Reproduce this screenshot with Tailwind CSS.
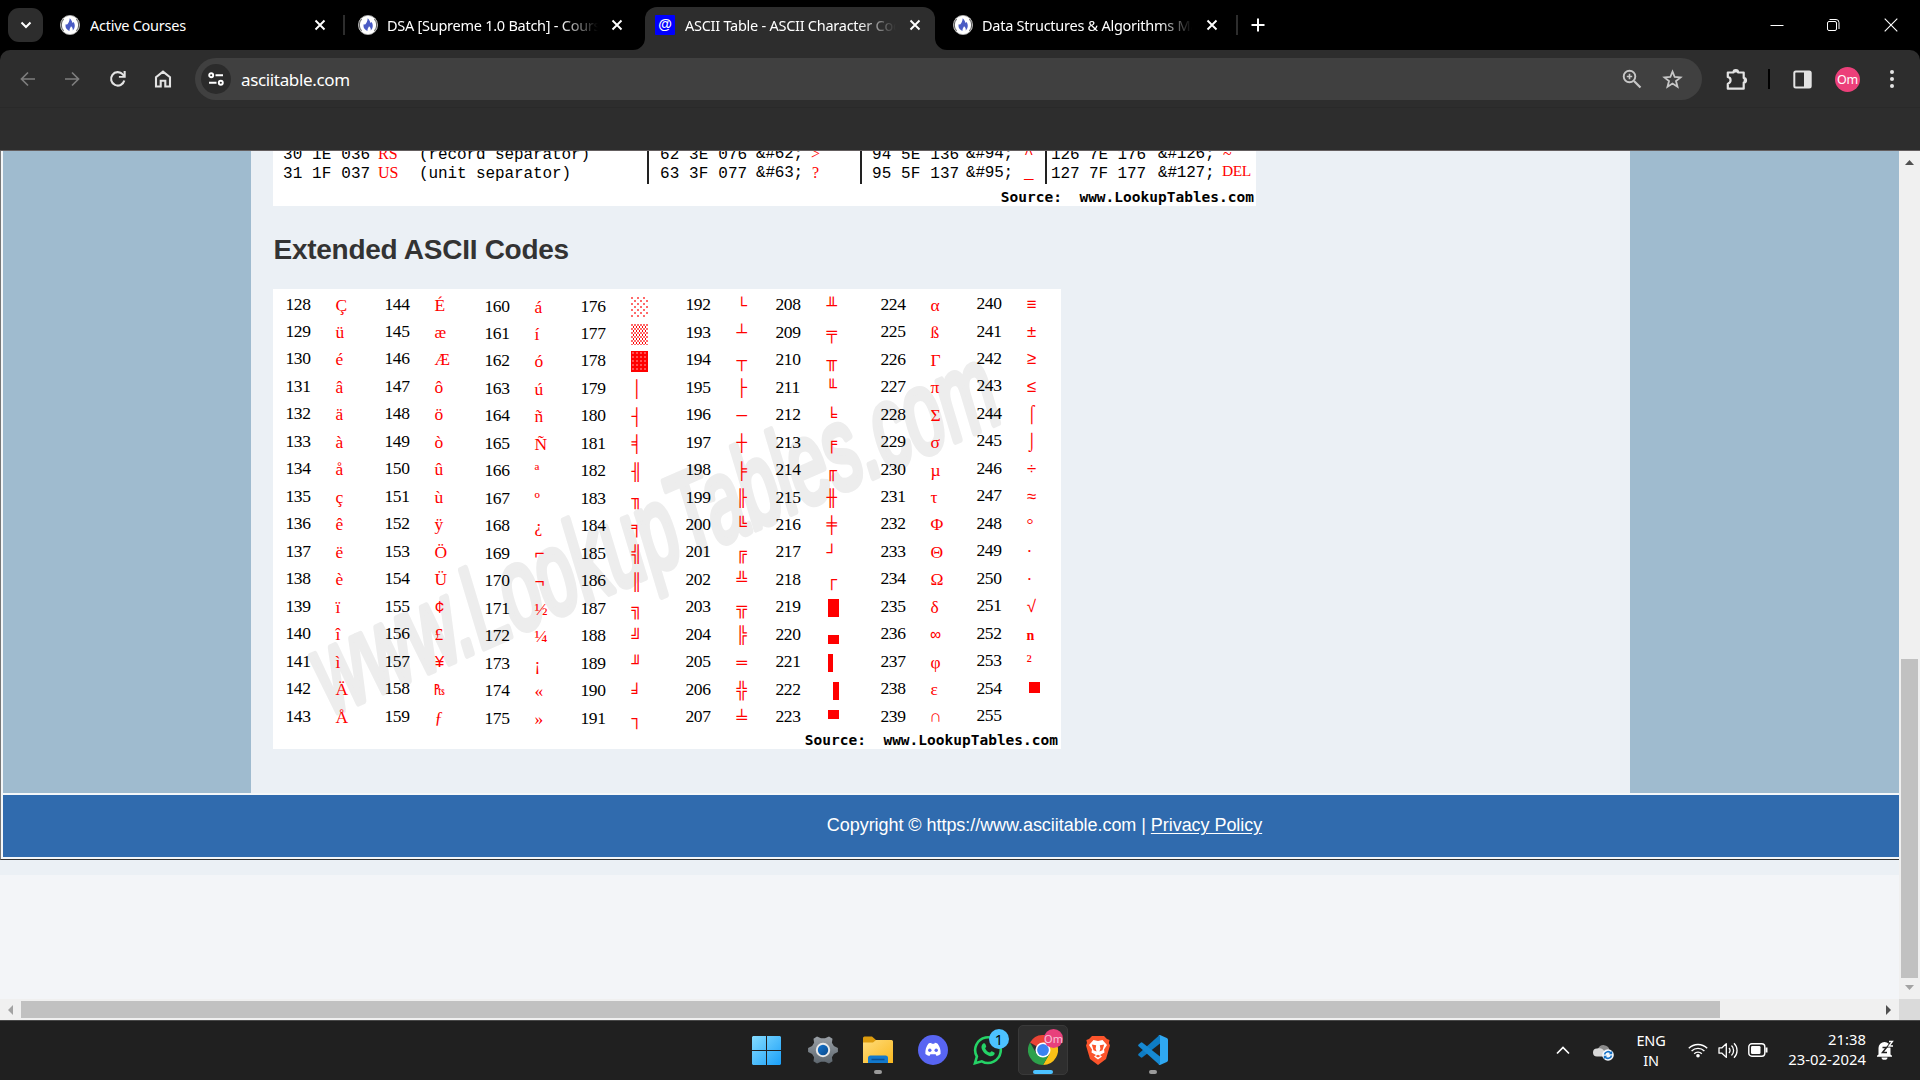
<!DOCTYPE html>
<html lang="en">
<head>
<meta charset="utf-8">
<title>ASCII Table</title>
<script src="https://cdn.jsdelivr.net/npm/@tailwindcss/browser@4"></script>
</head>
<body class="w-[1920px] h-[1080px] overflow-hidden flex flex-col bg-[#2d2d2d] font-['Noto_Sans','Open_Sans',sans-serif] text-white">

<svg class="hidden">
  <symbol id="fav" viewBox="0 0 20 20"><circle cx="10" cy="10" r="9.6" fill="#fff" stroke="#b9b9b9" stroke-width=".8"/><path d="M3.6 4.2A8.5 8.5 0 0 0 3.6 15.800M16.400 4.2a8.500 8.500 0 0 1 0 11.600" fill="none" stroke="#555" stroke-width="1"/><path d="M9.700 3.200c2.300 2 2.200 3.500 2.900 4.800l1-.900c1.600 2.500 1.800 6-.9 8.400.5-2-.5-3.300-1.700-4.300-.4 1.400-1.800 2.200-1.400 4.600-3-.5-5-4-3.700-6.700l1 .6c1.600-1.500 2.600-3.500 2.800-6.500z" fill="#4a5bc4"/></symbol>
  <symbol id="x" viewBox="0 0 12 12"><path d="M1.500 1.500l9 9M10.500 1.500l-9 9" stroke="#fff" stroke-width="1.900" fill="none"/></symbol>
</svg>

<!-- tab strip -->
<header class="h-[50px] shrink-0 bg-black flex relative text-[14.500px] leading-[24px] tracking-[-0.26px] whitespace-nowrap">
  <div class="w-[35px] h-[34px] mt-2 ml-2 rounded-[11px] bg-[#2d2d2d] flex items-center justify-center"><svg class="w-[12px] h-[8px]" viewBox="0 0 12 8"><path d="M1.500 1.500L6 6l4.500-4.500" fill="none" stroke="#fff" stroke-width="2"/></svg></div>
  <div class="w-[302px] h-full pl-[17px] flex items-center">
    <svg class="size-5 shrink-0"><use href="#fav"/></svg><span class="ml-[10px] w-[210px] overflow-hidden">Active Courses</span><svg class="ml-[14px] size-3 shrink-0"><use href="#x"/></svg><i class="ml-[17px] w-[2px] h-5 bg-[#2d2d2d] shrink-0"></i>
  </div>
  <div class="w-[300px] h-full pl-[13px] flex items-center">
    <svg class="size-5 shrink-0"><use href="#fav"/></svg><span class="ml-[9px] w-[211px] overflow-hidden [mask-image:linear-gradient(to_right,black_82%,transparent_100%)]">DSA [Supreme 1.0 Batch] - Course</span><svg class="ml-[13px] size-3 shrink-0"><use href="#x"/></svg>
  </div>
  <div class="w-[290px] h-[43px] mt-[7px] rounded-t-[12px] bg-[#2d2d2d] flex items-center pl-[10px] pb-[7px] relative">
    <svg class="absolute -left-3 bottom-0 size-3" viewBox="0 0 12 12"><path d="M12 0v12H0A12 12 0 0 0 12 0z" fill="#2d2d2d"/></svg>
    <svg class="absolute -right-3 bottom-0 size-3" viewBox="0 0 12 12"><path d="M0 0v12h12A12 12 0 0 1 0 0z" fill="#2d2d2d"/></svg>
    <span class="size-5 shrink-0 rounded-[1px] bg-[#0000ff] text-[14px] leading-[18px] text-center font-['Liberation_Sans',sans-serif] font-bold tracking-normal">@</span><span class="ml-[10px] w-[211px] overflow-hidden [mask-image:linear-gradient(to_right,black_82%,transparent_100%)]">ASCII Table - ASCII Character Codes</span><svg class="ml-[13px] size-3 shrink-0"><use href="#x"/></svg>
  </div>
  <div class="h-full pl-[18px] flex items-center">
    <svg class="size-5 shrink-0"><use href="#fav"/></svg><span class="ml-[9px] w-[210px] overflow-hidden [mask-image:linear-gradient(to_right,black_84%,transparent_100%)]">Data Structures &amp; Algorithms Masters</span><svg class="ml-[14px] size-3 shrink-0"><use href="#x"/></svg><i class="ml-[18px] w-[2px] h-5 bg-[#2d2d2d]"></i><svg class="ml-[13px] size-[14px]" viewBox="0 0 14 14"><path d="M7 .5v13M.5 7h13" stroke="#fff" stroke-width="2"/></svg>
  </div>
  <div class="ml-auto flex items-center pr-[22px] pb-[1px]">
    <svg class="w-[14px] h-[14px]" viewBox="0 0 14 14"><path d="M.5 7.500h13" stroke="#fff" stroke-width="1"/></svg>
    <svg class="ml-[42px] size-[14px]" viewBox="0 0 14 14"><rect x="1.500" y="3.500" width="9" height="9" rx="1.500" fill="none" stroke="#fff"/><path d="M3.500 1.500h6.500a3 3 0 0 1 3 3V11" fill="none" stroke="#fff"/></svg>
    <svg class="ml-[44px] size-[14px]" viewBox="0 0 14 14"><path d="M.7.7l12.600 12.600M13.300.7L.7 13.300" stroke="#fff" stroke-width="1.100"/></svg>
  </div>
</header>

<!-- toolbar -->
<div class="bg-black shrink-0"><div class="h-[58px] bg-[#2d2d2d] rounded-t-[10px] border-b border-[#292929] flex items-center pl-[20px] pt-[1px]">
  <svg class="size-4" viewBox="0 0 16 16"><path d="M15 8H2M8 1.500L1.500 8 8 14.500" fill="none" stroke="#7d7d7d" stroke-width="1.700"/></svg>
  <svg class="ml-[28px] size-4" viewBox="0 0 16 16"><path d="M1 8h13M8 1.500L14.500 8 8 14.500" fill="none" stroke="#7d7d7d" stroke-width="1.700"/></svg>
  <svg class="ml-[29px] size-[18px]" viewBox="0 0 18 18"><path d="M15.300 10.500A6.700 6.700 0 1 1 13.800 4.400L15.500 6" fill="none" stroke="#e3e3e3" stroke-width="2.100"/><path d="M16.700 1v6.800H9.900V5.900h4.700V1z" fill="#e3e3e3"/></svg>
  <svg class="ml-[27px] w-[18px] h-[18px]" viewBox="0 0 18 18"><path d="M2 16.500V7.200L9 1.700l7 5.500v9.300h-4.700v-5.700H6.700v5.700z" fill="none" stroke="#e3e3e3" stroke-width="2.100"/></svg>
  <div class="ml-[23px] w-[1507px] h-[42px] rounded-full bg-[#404040] flex items-center pl-[6px]">
    <div class="size-[30px] rounded-full bg-[#2b2b2b] flex items-center justify-center"><svg class="w-4 h-[14px]" viewBox="0 0 16 14"><g fill="none" stroke="#fff" stroke-width="1.900"><circle cx="3.200" cy="3.200" r="2"/><path d="M7.500 3.200H15M1 10.800h7.500"/><circle cx="12.800" cy="10.800" r="2"/></g></svg></div>
    <span class="ml-[10px] pt-[1px] text-[17px] leading-[22px] tracking-[-0.35px]">asciitable.com</span>
    <svg class="ml-auto size-[20px]" viewBox="0 0 20 20"><g fill="none" stroke="#c7c7c7"><circle cx="7.500" cy="7.500" r="5.800" stroke-width="1.900"/><path d="M12 12l6.500 6.500" stroke-width="2.200"/><path d="M7.500 4.800v5.400M4.800 7.500h5.400" stroke-width="1.600"/></g></svg>
    <svg class="ml-[20px] mr-[19px] size-[21px]" viewBox="0 0 21 21"><path d="M10.500 2.600l2.200 5.400 5.800.4-4.500 3.700 1.500 5.600-5-3.100-5 3.100L7 12.100 2.500 8.400l5.800-.4z" fill="none" stroke="#c7c7c7" stroke-width="1.800"/></svg>
  </div>
  <svg class="ml-[23px] size-[23px]" viewBox="0 0 23 23"><path d="M2.800 4.500H8.500a2.300 2.300 0 0 1 4.600 0h5.600V10a2.300 2.300 0 0 1 0 4.600v6.100H2.800v-5c3.700-1 3.700-5.800 0-6.800z" fill="none" stroke="#e3e3e3" stroke-width="2.200" stroke-linejoin="round"/><path d="M8.500 4.500a2.300 2.300 0 0 1 4.600 0zM18.700 10a2.300 2.300 0 0 1 0 4.600z" fill="#e3e3e3"/></svg>
  <i class="ml-[20px] w-[2px] h-5 bg-black"></i>
  <svg class="ml-[23px] size-[19px]" viewBox="0 0 19 19"><rect x="1.300" y="1.500" width="16.400" height="16" rx="1.500" fill="none" stroke="#e3e3e3" stroke-width="2"/><path d="M11 1.500h7v16h-7z" fill="#e3e3e3"/></svg>
  <div class="ml-[23px] size-[25px] rounded-full bg-[#ec407a] text-[12.500px] leading-[25px] text-center tracking-[-0.3px]">Om</div>
  <svg class="ml-[29px] w-[6px] h-[20px]" viewBox="0 0 6 20" fill="#e3e3e3"><circle cx="3" cy="3" r="2"/><circle cx="3" cy="10" r="2"/><circle cx="3" cy="17" r="2"/></svg>
</div></div>
<div class="h-[43px] shrink-0 border-b border-[#645f60]"></div>

<!-- page viewport -->
<div class="h-[848px] shrink-0 flex">
  <main class="w-[1899px] bg-[#f3f5f8] font-['Liberation_Sans',sans-serif]">
    <div class="h-[709px] bg-[#f4f7f9] border-l border-b border-l-[#777] border-b-[#333] pl-[2px]">
      <div class="h-[642px] flex bg-[#9fbbcf]">
        <div class="ml-[248px] w-[1379px] h-full bg-[#ebf0f5] pl-[22px] overflow-hidden">
          <!-- end of the main code table -->
          <div class="relative w-[983px] h-[55px] bg-white overflow-hidden text-black font-['Liberation_Mono',monospace] text-[16px] leading-[19px]">
            <div class="-mt-[5px]" id="codes"></div>
            <div class="absolute right-[2px] bottom-[2px] text-[14.500px] leading-[14px] font-bold whitespace-pre font-['DejaVu_Sans_Mono',monospace]">Source:  www.LookupTables.com</div>
            <i class="absolute left-[374px] top-0 w-[2px] h-[33px] bg-[#222]"></i><i class="absolute left-[587px] top-0 w-[2px] h-[33px] bg-[#222]"></i><i class="absolute left-[772px] top-0 w-[2px] h-[33px] bg-[#222]"></i>
          </div>
          <h2 class="mt-[28px] h-[32px] pl-[0.500px] text-[28px] leading-[32px] font-bold text-[#333] tracking-[-0.27px]">Extended ASCII Codes</h2>
          <!-- extended table -->
          <div class="relative mt-[23px] w-[788px] h-[460px] bg-white text-black">
            <svg class="absolute inset-0 w-[788px] h-[460px]" viewBox="0 0 788 460"><g transform="matrix(1 -.438 .3 1 55 427)"><text x="0" y="0" textLength="675" lengthAdjust="spacingAndGlyphs" font-family="Liberation Sans" font-size="112" fill="#ededed" stroke="#ededed" stroke-width="7" stroke-linejoin="round">www.LookupTables.com</text></g></svg>
            <div id="ext" class="relative pl-[12.500px] pt-[1px] grid grid-cols-[99px_100px_96px_105px_90px_105px_96px_83px]"></div>
            <div class="absolute right-[3px] bottom-[2px] text-[14.500px] leading-[14px] font-bold whitespace-pre font-['DejaVu_Sans_Mono',monospace]">Source:  www.LookupTables.com</div>
          </div>
        </div>
      </div>
      <footer class="mt-[2px] h-[62px] bg-[#306bae] text-white text-[18px] leading-[60px] text-center pl-[187px]"><span class="tracking-[-0.05px]">Copyright © https://www.asciitable.com | <a class="underline underline-offset-2">Privacy Policy</a></span></footer>
    </div>
    <div class="h-[15px] bg-[#ebf0f5]"></div>
  </main>
  <div class="w-[21px] bg-[#f0f0f0] flex flex-col items-center">
    <svg class="mt-[9px] w-[9px] h-[5px]" viewBox="0 0 9 5"><path d="M4.500 0L9 5H0z" fill="#505050"/></svg>
    <i class="mt-[494px] w-[17px] h-[319px] bg-[#c1c1c1]"></i>
    <svg class="mt-[7px] w-[9px] h-[5px]" viewBox="0 0 9 5"><path d="M4.500 5L9 0H0z" fill="#a3a3a3"/></svg>
  </div>
</div>
<div class="h-[21px] shrink-0 bg-[#f0f0f0] flex items-center">
  <svg class="ml-[8px] w-[5px] h-[10px]" viewBox="0 0 5 10"><path d="M5 0v10L0 5z" fill="#a3a3a3"/></svg>
  <i class="ml-[8px] w-[1699px] h-[17px] bg-[#c1c1c1]"></i>
  <svg class="ml-auto w-[5px] h-[10px]" viewBox="0 0 5 10"><path d="M0 0v10l5-5z" fill="#505050"/></svg>
  <i class="ml-[8px] w-[21px] h-full bg-[#dadada]"></i>
</div>

<!-- taskbar -->
<footer class="h-[60px] shrink-0 bg-[#202020] border-t border-[#484848] flex items-start relative text-[14.500px]">
  <svg class="ml-[752px] mt-[15px] size-[29px]" viewBox="0 0 29 29"><defs><linearGradient id="wg" x1="0" y1="0" x2="1" y2="1" gradientUnits="objectBoundingBox"><stop stop-color="#85dcff"/><stop offset="1" stop-color="#1a9ff8"/></linearGradient></defs><path d="M1 0h13v14H0V1zM15 0h13l1 1v13H15zM0 15h14v14H1l-1-1zM15 15h14v13l-1 1H15z" fill="url(#wg)"/></svg>
  <svg class="ml-[27px] mt-[14px] size-[30px]" viewBox="0 0 30 30"><defs><linearGradient id="gg" x1="0" y1="0" x2="0" y2="1"><stop stop-color="#9aa0a6"/><stop offset="1" stop-color="#5d666e"/></linearGradient><linearGradient id="gb" x1="0" y1="0" x2="1" y2="1"><stop stop-color="#1475cf"/><stop offset="1" stop-color="#0b4a8c"/></linearGradient></defs><path d="M9 1.500l4 1.700h4l4-1.700 3.500 2.200-.6 4 2 3.300 4 2v4l-4 2-2 3.300.6 4L21 28.500l-4-1.700h-4l-4 1.700-3.500-2.200.6-4-2-3.300-4-2v-4l4-2 2-3.300-.6-4z" fill="url(#gg)"/><circle cx="15" cy="15" r="7.200" fill="#e9e9e9"/><circle cx="15" cy="15" r="5.200" fill="url(#gb)"/></svg>
  <div class="ml-[25px] mt-[15px] flex flex-col items-center"><svg class="w-[30px] h-[28px]" viewBox="0 0 30 28"><defs><linearGradient id="fg" x1="0" y1="0" x2="1" y2="1"><stop stop-color="#ffdc7a"/><stop offset="1" stop-color="#f9b81f"/></linearGradient></defs><path d="M0 2a1.500 1.500 0 0 1 1.500-1.500H9L13 4v4H0z" fill="#dd9c0e"/><path d="M0 6.500h10L13 4h15.500A1.500 1.500 0 0 1 30 5.500V27H0z" fill="url(#fg)"/><path d="M5 27v-5a2.500 2.500 0 0 1 2.500-2.500h15A2.500 2.500 0 0 1 25 22v5z" fill="#1279cd"/><path d="M8.500 23.500h13" stroke="#0a4f93" stroke-width="1.500"/></svg><i class="mt-[6px] w-2 h-1 rounded-full bg-[#9a9a9a]"></i></div>
  <svg class="ml-[25px] mt-[14px] size-[30px]" viewBox="0 0 30 30"><circle cx="15" cy="15" r="15" fill="#5865f2"/><path d="M10.300 8.700c1.200-.6 2-.7 2.900-.9l.5 1h2.600l.5-1c1 .2 1.800.4 2.900.9 2 2.900 3.200 6 2.900 10.200a11 11 0 0 1-4 2l-1-1.700h-5.200l-1 1.700a11 11 0 0 1-4-2c-.3-4.200.9-7.300 2.900-10.200z" fill="#fff"/><circle cx="11.800" cy="15.300" r="1.700" fill="#5865f2"/><circle cx="18.200" cy="15.300" r="1.700" fill="#5865f2"/></svg>
  <div class="ml-[25px] mt-[14px] relative size-[30px]"><svg class="size-[30px]" viewBox="0 0 30 30"><path d="M2 28.200l1.900-6.700a12.800 12.800 0 1 1 4.900 4.800z" fill="none" stroke="#25d366" stroke-width="2.600"/><path d="M10.600 8.300c.6-.3 1.300-.2 1.600.5l1 2.400c.3.700-1.200 1.600-1 2.200.8 1.900 2.400 3.400 4.400 4.200.7.200 1.500-1.700 2.200-1.400l2.500 1.200c.6.400.4 1.500 0 2.100-1 1.500-3 2-5 1.400-4-1.200-7.200-4.600-7.800-8.100-.2-1.800.8-3.900 2.100-4.500z" fill="#25d366"/></svg><span class="absolute left-[16px] -top-[6px] size-5 rounded-full bg-[#4cc2ff] text-black text-[14.500px] leading-5 text-center">1</span></div>
  <div class="ml-[15px] mt-[4px] relative w-[50px] h-[50px] rounded-[5px] bg-[#2e2e2e] border border-[#393939] flex flex-col items-center pt-[9px]"><svg class="size-[30px] shrink-0" viewBox="-15 -15 30 30"><path d="M0 0L-13-7.500A15 15 0 0 1 13-7.500z" fill="#ea4335"/><path d="M0-7.500h13A15 15 0 0 1 0 15L6.500 3.750z" fill="#fbc116"/><path d="M-13-7.500A15 15 0 0 0 0 15L6.500 3.750 0 0-6.500 3.750z" fill="#2da14b"/><circle r="7.500" fill="#fff"/><circle r="5.900" fill="#3b82f0"/></svg><i class="mt-[5px] w-5 h-1 rounded-full bg-[#4cc2ff] shrink-0"></i><span class="absolute left-[25px] top-[3px] size-[19px] rounded-full bg-[#e8407c] text-[#f9c6d9] text-[11px] leading-[19px] text-center">Om</span></div>
  <svg class="ml-[17px] mt-[14px] w-[26px] h-[30px]" viewBox="0 0 26 30"><path d="M7 1h12l3 3 2.500 1-.6 3L25 10.500 21 24l-8 6-8-6L1 10.500 2 8 1.400 5 4 4z" fill="#fb542b"/><path d="M8.500 5l4.500 1 4.500-1 4.500 5-3 4.500.5 3-4.500 2.500 2 1.500-4 3-4-3 2-1.500L6.500 17.500l.5-3L4 10z" fill="#fff"/><path d="M6.800 9.500l4.400.8-.6 3.500 1 2.700-3.100-1.200zM19.200 9.500l-4.400.8.6 3.500-1 2.700 3.100-1.200zM10.500 21l2.500-1.300L15.500 21 13 22.600z" fill="#fb542b"/></svg>
  <div class="ml-[27px] mt-[14px] flex flex-col items-center"><svg class="size-[30px]" viewBox="0 0 30 30"><path d="M22 0v8.500L4.500 22.300a1.500 1.500 0 0 1-1.800 0L.6 20.400a1.200 1.200 0 0 1 0-1.700L21 .4z" fill="#0e7cc4"/><path d="M22 30v-8.500L4.500 7.700a1.500 1.500 0 0 0-1.800 0L.6 9.600a1.200 1.200 0 0 0 0 1.700L21 29.600z" fill="#1689d3"/><path d="M22 0l6.800 3c.8.400 1.200 1 1.200 1.800v20.400c0 .8-.4 1.400-1.200 1.800L22 30c-.8.200-1.400 0-2-.5.900.6 2-.1 2-1.200V1.700C22 .6 20.900 0 20 .5c.6-.5 1.200-.7 2-.5z" fill="#2fa8f2"/></svg><i class="mt-[5px] w-2 h-1 rounded-full bg-[#9a9a9a]"></i></div>

  <div class="ml-auto h-[58px] flex items-center pr-[26px] leading-5">
    <svg class="w-[14px] h-[9px]" viewBox="0 0 14 9"><path d="M1 7.500l6-6 6 6" fill="none" stroke="#fff" stroke-width="1.700"/></svg>
    <svg class="ml-[23px] mt-[3px] w-[21px] h-[18px]" viewBox="0 0 21 18"><path d="M5 6a6 6 0 0 1 11.500 1L14 11H6z" fill="#8c8c8c"/><path d="M4 13.500A4 4 0 0 1 4 5.500c4-1 6 0 8 3.500l1 4.500z" fill="#d8d8d8"/><circle cx="15" cy="12" r="5.800" fill="#f4f8fc"/><path d="M11.500 11.500a3.600 3.600 0 0 1 6.500-1.300M18.500 12.500a3.600 3.600 0 0 1-6.500 1.300" fill="none" stroke="#1673c8" stroke-width="1.600"/><path d="M19.200 7.800v3.400h-3.400zM10.800 16.200v-3.400h3.400z" fill="#1673c8"/></svg>
    <div class="ml-[21px] w-[32px] text-center tracking-[-0.2px]">ENG<br>IN</div>
    <svg class="ml-[21px] w-[20px] h-[16px]" viewBox="0 0 20 16"><g fill="none" stroke="#fff" stroke-width="1.400"><path d="M.8 6.300a13 13 0 0 1 18.400 0M3.600 9a9.200 9.200 0 0 1 12.800 0M6.200 11.700a5.400 5.400 0 0 1 7.600 0"/></g><circle cx="10" cy="13.800" r="1.800" fill="#fff"/></svg>
    <svg class="ml-[10px] w-[20px] h-[17px]" viewBox="0 0 20 17"><path d="M1 5.800h3l4.300-4.200v13.800L4 11.200H1zM11 6a3.500 3.500 0 0 1 0 5M13.500 3.500a7 7 0 0 1 0 10M16 1.300a10 10 0 0 1 0 14.400" fill="none" stroke="#fff" stroke-width="1.300" stroke-linejoin="round"/></svg>
    <svg class="ml-[10px] w-[20px] h-[14px]" viewBox="0 0 20 14"><rect x=".8" y=".8" width="16" height="12.400" rx="3" fill="none" stroke="#fff" stroke-width="1.400"/><rect x="3" y="3" width="9.500" height="8" rx="1.200" fill="#fff"/><path d="M18.500 4.500v5" stroke="#fff" stroke-width="2"/></svg>
    <div class="ml-[17px] w-[81px] pb-[3px] text-right whitespace-nowrap text-[14.800px] tracking-[0.050px]">21:38<br>23-02-2024</div>
    <svg class="ml-[10px] w-[18px] h-[20px]" viewBox="0 0 17 20"><path d="M2 14.500V8a6 6 0 0 1 12 0v6.500l1.500 1.200v1H.5v-1zM5 17.500h6a3 2.300 0 0 1-6 0z" fill="#fff"/><path d="M12.500 1.500h3.500l-3.500 4.500h4" fill="none" stroke="#202020" stroke-width="3"/><path d="M6 7.500h4L6 12.500h4.500" fill="none" stroke="#202020" stroke-width="1.500"/><path d="M12.500 1.500h3.500l-3.500 4.500h4" fill="none" stroke="#fff" stroke-width="1.300"/></svg>
  </div>
</footer>

<script>
// Last rows of the ASCII table: [left, text, kind], left is relative to the table.
const kinds = {
  k: "absolute top-0 whitespace-pre tracking-[0.1px]",
  n: "absolute top-0 whitespace-pre tracking-[-0.1px]",
  e: "absolute -top-[1px] whitespace-pre tracking-[-0.2px]",
  r: "absolute -top-[2px] whitespace-pre text-[#f00] font-['Liberation_Serif',serif] text-[16px]",
  m: "absolute top-0 whitespace-pre text-[#f00] font-['Liberation_Mono',monospace] text-[16px]",
  d: "absolute -top-[4px] whitespace-pre text-[#f00] font-['Liberation_Serif',serif] text-[15.500px] tracking-[-0.4px]"
};
const rows = [
  [[10,"30 1E 036","k"],[105,"RS","r"],[146,"(record separator)","n"],[387,"62 3E 076","k"],[483,"&#62;","e"],[538,">","r"],[599,"94 5E 136","k"],[693,"&#94;","e"],[751,"^","m"],[778,"126 7E 176","n"],[885,"&#126;","e"],[950,"~","r"]],
  [[10,"31 1F 037","k"],[105,"US","r"],[146,"(unit separator)","n"],[387,"63 3F 077","k"],[483,"&#63;","e"],[539,"?","r"],[599,"95 5F 137","k"],[693,"&#95;","e"],[751,"_","m"],[778,"127 7F 177","n"],[885,"&#127;","e"],[949,"DEL","d"]]
];
for (const row of rows) {
  const line = document.createElement("div");
  line.className = "relative h-[19px]";
  for (const [x, t, k] of row) {
    const s = document.createElement("span");
    s.className = kinds[k]; s.style.left = x + "px"; s.textContent = t;
    line.append(s);
  }
  document.getElementById("codes").append(line);
}

// Extended codes, sixteen to a column; top is the column's offset.
const columns = [
  {top: 1.3, g: "ÇüéâäàåçêëèïîìÄÅ"}, {top: 1.3, g: "ÉæÆôöòûùÿÖÜ¢£¥₧ƒ"},
  {top: 3.3, g: "áíóúñÑªº¿⌐¬½¼¡«»"}, {top: 3.3, g: "░▒▓│┤╡╢╖╕╣║╗╝╜╛┐"},
  {top: 2, g: "└┴┬├─┼╞╟╚╔╩╦╠═╬╧"}, {top: 2, g: "╨╤╥╙╘╒╓╫╪┘┌█▄▌▐▀"},
  {top: 1.5, g: "αßΓπΣσµτΦΘΩδ∞φε∩"}, {top: .8, g: "≡±≥≤⌠⌡÷≈°··√n²■ "}
];
const blocks = {
  "█": "mt-[1px] ml-[2px] w-[11px] h-[18px] bg-[#f00]",
  "▄": "mt-[9px] ml-[2px] w-[11px] h-[9px] bg-[#f00]",
  "▌": "mt-[1px] ml-[2px] w-[5px] h-[18px] bg-[#f00]",
  "▐": "mt-[1px] ml-[7px] w-[6px] h-[18px] bg-[#f00]",
  "▀": "-mt-[6px] ml-[2px] w-[11px] h-[9px] bg-[#f00]",
  "■": "-mt-[3px] ml-[2px] w-[11px] h-[11px] bg-[#f00]",
  "░": "w-[17px] h-[20px] bg-[radial-gradient(circle_at_1px_1px,#f00_0.5px,transparent_1px),radial-gradient(circle_at_4px_4px,#f00_0.5px,transparent_1px)] bg-[size:6px_6px]",
  "▒": "w-[17px] h-[21px] bg-[radial-gradient(circle_at_1px_1px,#f00_0.5px,transparent_1px),radial-gradient(circle_at_2.500px_3px,#f00_0.5px,transparent_1px)] bg-[size:3px_4px]",
  "▓": "w-[17px] h-[21px] bg-[#f00] bg-[radial-gradient(circle_at_2px_2px,#fff_0.3px,transparent_0.9px)] bg-[size:4px_4px]"
};
columns.forEach((col, c) => {
  const box = document.createElement("div");
  box.style.paddingTop = col.top + "px";
  [...col.g].forEach((ch, i) => {
    const row = document.createElement("div");
    row.className = "h-[27.470px] flex items-center whitespace-pre";
    const n = document.createElement("span");
    n.className = "w-[50px] shrink-0 font-['Liberation_Serif',serif] text-[17.500px] leading-[20px] tracking-[-0.4px] pb-[3px]";
    n.textContent = 128 + c * 16 + i;
    const g = document.createElement("span");
    if (blocks[ch]) g.className = blocks[ch];
    else if (ch >= "─" && ch <= "╬") g.className = "text-[#f00] font-['Liberation_Mono',monospace] text-[17.500px] leading-[20px] pl-[1px]";
    else if (ch === "n") g.className = "text-[#f00] font-['Liberation_Serif',serif] font-bold text-[14px] pt-[2px]";
    else if ("⌐¬≡±≥≤÷≈⌠⌡∩₧¢¥√∞".includes(ch)) g.className = "text-[#f00] font-['Liberation_Mono',monospace] text-[17px] leading-[20px] pt-[2px]";
    else g.className = "text-[#f00] font-['Liberation_Serif',serif] text-[17.500px] leading-[20px] pb-[1px]";
    if (!blocks[ch]) g.textContent = ch;
    row.append(n, g);
    box.append(row);
  });
  document.getElementById("ext").append(box);
});
</script>
</body>
</html>
